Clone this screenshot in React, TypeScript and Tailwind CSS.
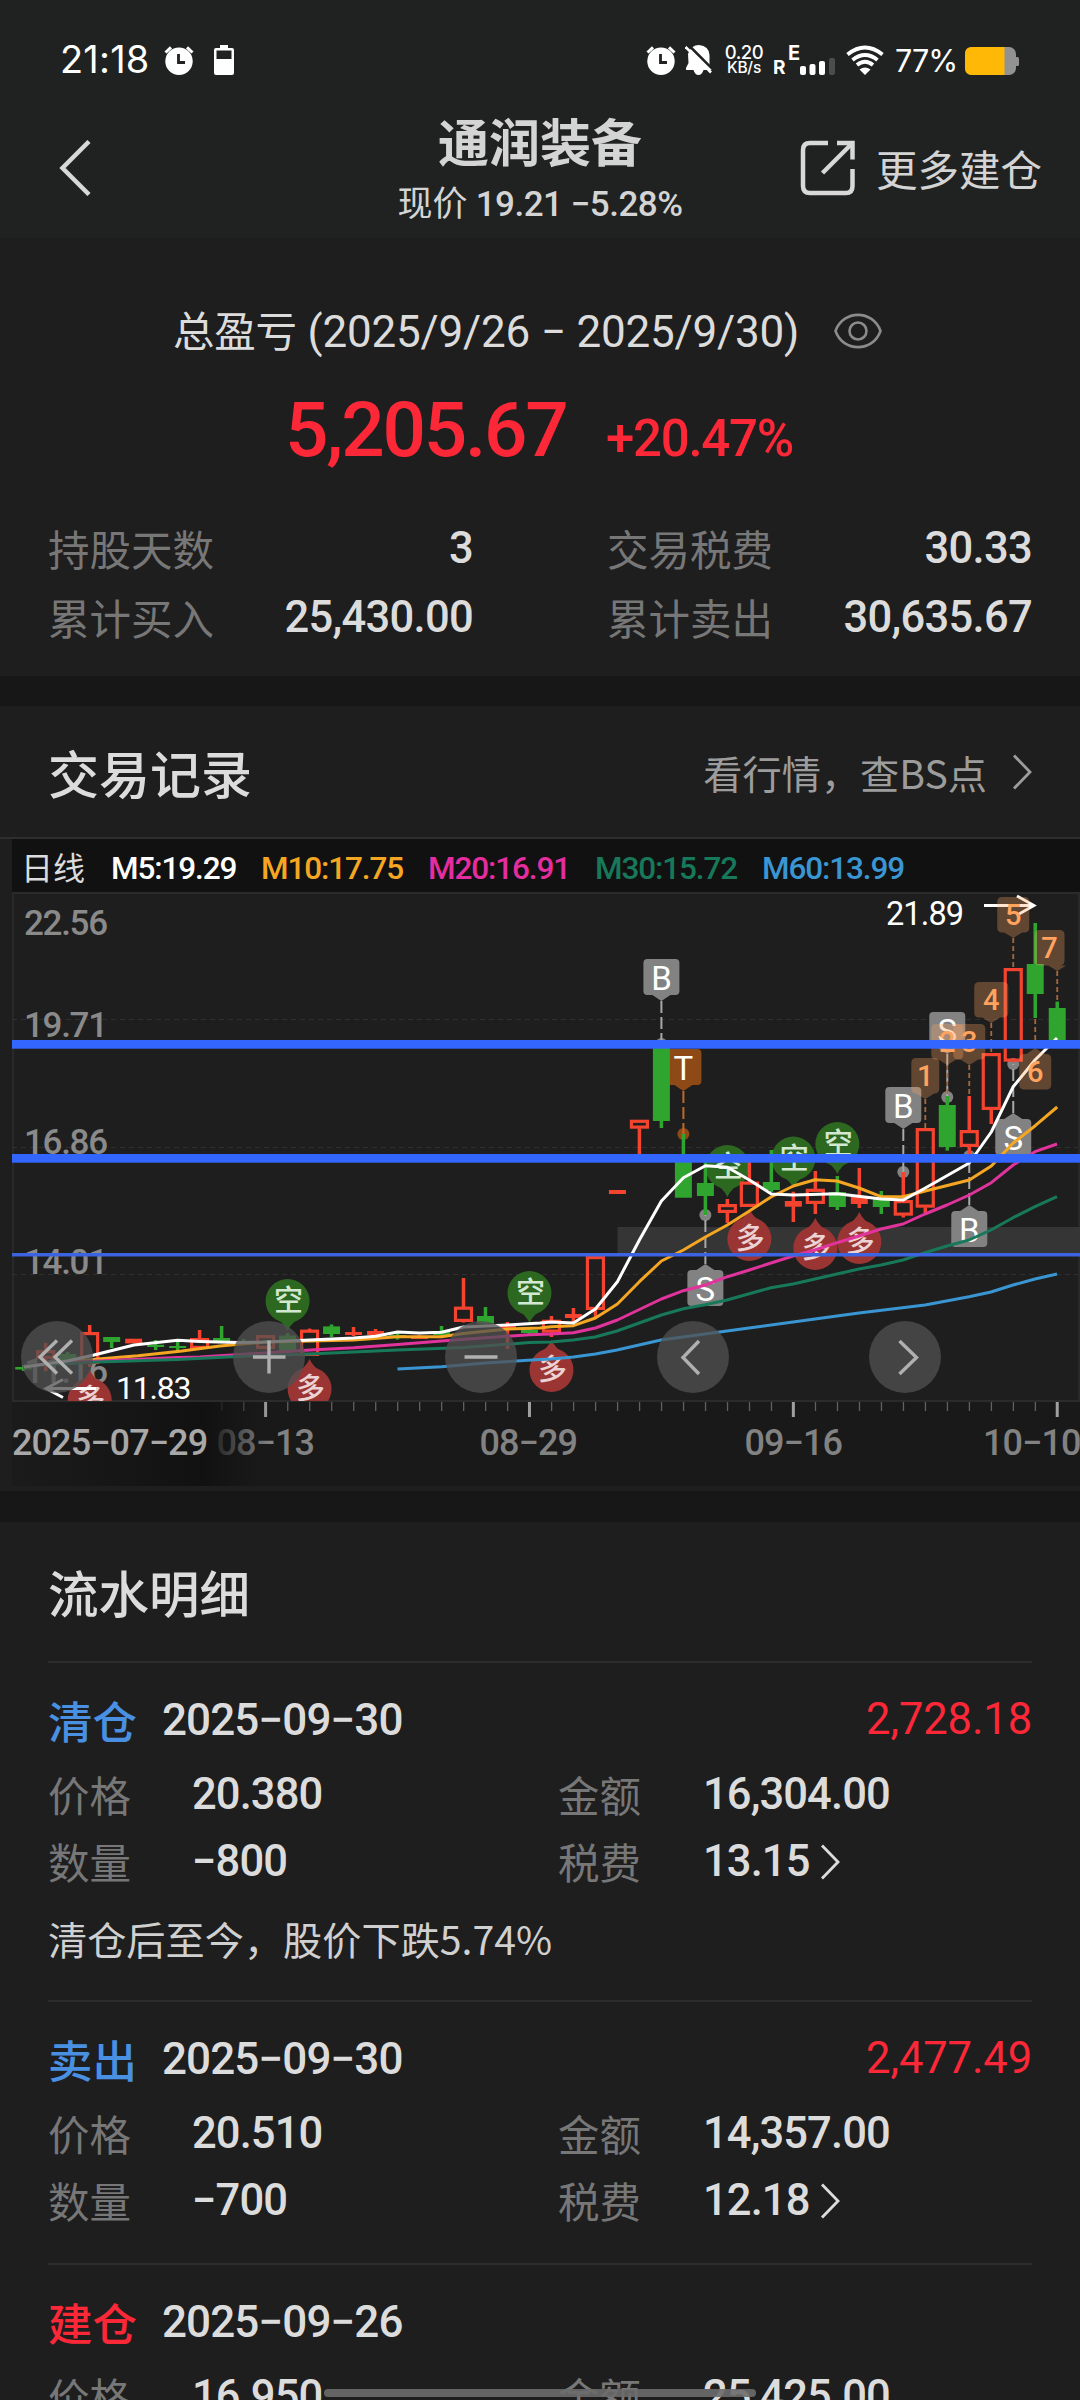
import React from "react";

const CJK = "font-['Noto_Sans_CJK_SC',sans-serif]";
const NUM = "font-['Roboto','Noto_Sans_CJK_SC',sans-serif] whitespace-nowrap";

/* ---------- icons ---------- */

function AlarmIcon() {
  return (
    <svg width="30" height="30" viewBox="0 0 30 30">
      <path d="M1.5 7.5 L7 2.3 M28.5 7.5 L23 2.3" stroke="#fff" strokeWidth="3" />
      <circle cx="15" cy="16.3" r="13.7" fill="#fff" />
      <path d="M14.5 9 V17.5 H21" stroke="#202221" strokeWidth="2.8" fill="none" />
    </svg>
  );
}

function BatteryMini() {
  return (
    <svg width="20" height="30" viewBox="0 0 20 30">
      <path d="M6 0 H14 V3 H18 Q20 3 20 5 V28 Q20 30 18 30 H2 Q0 30 0 28 V5 Q0 3 2 3 H6 Z" fill="#fff" />
      <rect x="2.5" y="5.5" width="15" height="8.5" fill="#202221" />
    </svg>
  );
}

function BellOff() {
  return (
    <svg width="28" height="30" viewBox="0 0 28 30">
      <path d="M3 9 Q6 0 14 0 Q24 1 24.500 10 V20 L27 24 V25 H18.5 Q17 30 13.500 30 Q10 30 8.500 25 H1 V23 L3.500 18 Z" fill="#fff" />
      <path d="M3.500 0 L29 25.500" stroke="#202221" strokeWidth="2.6" />
      <path d="M0.500 2 L26 27.5" stroke="#fff" strokeWidth="2.6" />
    </svg>
  );
}

function WifiIcon() {
  return (
    <svg width="38" height="30" viewBox="0 0 38 30" fill="none" stroke="#fff" strokeWidth="3.8">
      <path d="M1.5 9.5 Q19 -4.5 36.5 9.5" />
      <path d="M6.500 15 Q19 5 31.500 15" />
      <path d="M11 20 Q19 13.500 27 20" />
      <path d="M13.5 24.5 Q19 20.5 24.5 24.5 L19 30 Z" fill="#fff" stroke="none" />
    </svg>
  );
}

function StatusBar() {
  return (
    <div className="flex h-[75px] items-end pl-[60px] text-white">
      <span className="w-[90px] font-['Inter',sans-serif] text-[38px] leading-[31px] tracking-[0.2px]">21:18</span>
      <span className="ml-[14px]"><AlarmIcon /></span>
      <span className="ml-[20px]"><BatteryMini /></span>
      <span className="ml-[412px]"><AlarmIcon /></span>
      <span className="ml-[9px]"><BellOff /></span>
      <span className="ml-[11px] flex w-[40px] flex-col items-center font-['Inter',sans-serif] font-medium">
        <span className="text-[18.5px] leading-[18px] tracking-[-0.5px]">0.20</span>
        <span className="text-[15.5px] leading-[14px] tracking-[-0.2px]">KB/s</span>
      </span>
      <span className="ml-[9px] w-[15px] self-end font-['Inter',sans-serif] text-[19px] font-bold leading-[15px]">R</span>
      <span className="mb-[14px] w-[12px] font-['Inter',sans-serif] text-[20px] font-bold leading-[16px]">E</span>
      <svg width="36" height="17" viewBox="25 13 36 17">
        <rect x="25" y="21" width="6" height="9" rx="2" fill="#fff" />
        <rect x="34.5" y="19" width="6" height="11" rx="2" fill="#fff" />
        <rect x="44" y="16" width="6" height="14" rx="2" fill="#fff" />
        <rect x="54" y="13" width="6" height="17" rx="2" fill="#4b4c4c" />
      </svg>
      <span className="ml-[10px]"><WifiIcon /></span>
      <span className="ml-[11px] w-[62px] font-['Inter',sans-serif] text-[30.5px] leading-[28px] tracking-[-0.9px]">77%</span>
      <svg className="ml-[8px]" width="54" height="28" viewBox="0 0 54 28">
        <rect x="0" y="0" width="51" height="28" rx="7" fill="#929292" />
        <rect x="50" y="10" width="4" height="9" rx="1.5" fill="#929292" />
        <path d="M7 0 H39.5 V28 H7 Q0 28 0 21 V7 Q0 0 7 0 Z" fill="#ffb805" />
      </svg>
    </div>
  );
}

function Header() {
  return (
    <header className="h-[238px] shrink-0 bg-[#202221] text-[#d4d4d4]">
      <StatusBar />
      <div className="flex h-[163px] pt-[30px]">
        <div className="w-[340px] pl-[58px] pt-[35px]">
          <svg width="34" height="56" viewBox="0 0 34 56" fill="none" stroke="#d8d8d8" strokeWidth="4.5">
            <path d="M31 1.5 L4.5 28 L31 54.5" />
          </svg>
        </div>
        <div className="flex w-[400px] flex-col items-center">
          <h1 className={`${CJK} mt-[7px] text-[51px] font-bold leading-[56px]`}>通润装备</h1>
          <div className={`${NUM} mt-[13px] text-[35px] font-medium leading-[40px] tracking-[-0.5px]`}>
            <span className={`${CJK} text-[35px] font-normal tracking-normal`}>现价</span> 19.21 −5.28%
          </div>
        </div>
        <div className="flex pl-[59px] pt-[35px]">
          <svg width="58" height="58" viewBox="0 0 58 58" fill="none" stroke="#d8d8d8" strokeWidth="4.5">
            <path d="M29 3 H11 Q4 3 4 10 V46 Q4 53 11 53 H47 Q53.5 53 53.5 46 V29" />
            <path d="M38 3 H53.5 V19.5" />
            <path d="M53 3.5 L23.5 33" />
          </svg>
          <span className={`${CJK} ml-[19px] whitespace-nowrap text-[41.5px] leading-[56px]`}>更多建仓</span>
        </div>
      </div>
    </header>
  );
}

/* ---------- summary ---------- */

function Stat({ label, value }: { label: string; value: string }) {
  return (
    <div className="flex items-center justify-between">
      <span className={`${CJK} text-[41.5px] leading-[69px] text-[#777]`}>{label}</span>
      <span className={`${NUM} text-[43.5px] font-medium leading-[69px] tracking-[-0.7px] text-[#dcdcdc]`}>{value}</span>
    </div>
  );
}

function Summary() {
  return (
    <section className="h-[438px] shrink-0">
      <div className="flex items-center pl-[173px] pt-[61px]">
        <div className={`${NUM} w-[661px] text-[44px] leading-[60px] tracking-[-0.2px] text-[#dcdcdc]`}>
          <span className={`${CJK} text-[41.5px]`}>总盈亏</span> (2025/9/26 − 2025/9/30)
        </div>
        <svg width="48" height="36" viewBox="0 0 48 36" fill="none" stroke="#8b8b8b" strokeWidth="2.6">
          <path d="M1.5 18 C9 -3.5 39 -3.5 46.5 18 C39 39.5 9 39.5 1.5 18 Z" />
          <circle cx="24" cy="18" r="8.5" />
        </svg>
      </div>
      <div className={`${NUM} flex items-baseline pl-[285px] pt-[23px] text-[#fc2838]`}>
        <span className="w-[321px] text-[76.5px] font-medium leading-[90px] tracking-[-2.2px]">5,205.67</span>
        <span className="text-[51px] font-medium tracking-[-1.3px]">+20.47%</span>
      </div>
      <div className="ml-[48px] mt-[36px] grid grid-cols-[425px_425px] gap-x-[134px]">
        <Stat label="持股天数" value="3" />
        <Stat label="交易税费" value="30.33" />
        <Stat label="累计买入" value="25,430.00" />
        <Stat label="累计卖出" value="30,635.67" />
      </div>
    </section>
  );
}

/* ---------- chart ---------- */

const X = (k: number) => 23.7 + 21.99 * k;
const RED = "#f4432f";
const GREEN = "#2fa52f";

// [slot, kind (r = hollow red, f = solid red, g = green), body top, body bottom, wick top, wick bottom]
type Candle = [number, "r" | "f" | "g", number, number, number, number];
const candles: Candle[] = [
  [0, "g", 1367, 1369.5, 1365, 1371],
  [1, "r", 1350, 1359, 1343, 1371],
  [2, "g", 1354, 1360, 1352, 1361],
  [3, "r", 1332, 1364, 1325, 1367],
  [4, "g", 1337, 1342, 1337, 1348],
  [5, "f", 1338.7, 1343.4, 1338.7, 1343],
  [6, "g", 1344.8, 1347, 1340, 1350],
  [7, "g", 1346, 1348, 1342, 1351],
  [8, "r", 1338, 1349, 1330, 1349],
  [9, "g", 1338, 1342, 1326, 1342],
  [10, "g", 1341, 1343, 1339, 1345],
  [11, "r", 1335, 1349, 1335, 1349],
  [12, "g", 1335.5, 1350.6, 1333, 1351],
  [13, "r", 1329.6, 1356, 1328.6, 1356],
  [14, "g", 1326.4, 1334, 1324.5, 1337],
  [15, "f", 1332, 1335, 1327, 1336],
  [16, "f", 1331, 1335, 1329, 1336],
  [17, "g", 1335, 1337, 1332, 1339.5],
  [18, "f", 1336, 1339, 1335, 1339],
  [19, "g", 1331, 1335, 1326, 1336],
  [20, "r", 1306.6, 1322, 1278, 1322.5],
  [21, "g", 1316, 1323.6, 1307, 1324],
  [22, "f", 1324, 1328, 1322, 1349],
  [23, "g", 1330, 1333, 1328, 1334],
  [24, "r", 1319.7, 1332.7, 1316, 1337],
  [25, "f", 1314, 1318, 1308, 1323],
  [26, "r", 1256, 1310, 1256, 1317],
  [27, "f", 1190, 1194, 1190, 1194],
  [28, "r", 1119.7, 1128.7, 1119.7, 1157],
  [29, "g", 1044, 1121, 1044, 1128],
  [30, "g", 1157, 1197.7, 1134, 1197.7],
  [31, "g", 1183, 1196, 1162, 1215],
  [32, "r", 1204, 1213, 1199, 1223],
  [33, "r", 1181.5, 1207, 1157, 1207],
  [34, "g", 1182, 1190, 1150, 1192],
  [35, "f", 1201, 1206.7, 1191.7, 1222],
  [36, "r", 1188.7, 1204, 1171, 1214],
  [37, "g", 1192, 1207, 1176, 1210],
  [38, "f", 1197, 1204, 1168, 1208],
  [39, "g", 1198, 1207, 1191, 1214],
  [40, "r", 1200, 1215.7, 1172, 1217.5],
  [41, "r", 1128, 1207.7, 1128, 1213],
  [42, "g", 1105, 1147, 1096, 1150.6],
  [43, "r", 1130, 1147, 1096, 1155],
  [44, "r", 1053, 1110, 1053, 1124],
  [45, "r", 968, 1061.7, 968, 1062],
  [46, "g", 964, 994, 923, 1018],
  [47, "g", 1008, 1043, 1001.6, 1043],
];

function CandleMark({ c }: { c: Candle }) {
  const [k, kind, top, bot, hi, lo] = c;
  const x = X(k);
  const color = kind === "g" ? GREEN : RED;
  return (
    <g>
      {hi < top && <rect x={x - 1.75} y={hi} width="3.5" height={top - hi + 0.5} fill={color} />}
      {lo > bot && <rect x={x - 1.75} y={bot - 0.5} width="3.5" height={lo - bot + 0.5} fill={color} />}
      {kind === "r" ? (
        <rect x={x - 8} y={top + 1.6} width="16" height={bot - top - 3.2} fill="none" stroke={color} strokeWidth="3.2" />
      ) : (
        <rect x={x - 8.5} y={top} width="17" height={bot - top} fill={color} />
      )}
    </g>
  );
}

const lines: { color: string; pts: string }[] = [
  {
    color: "#f5a623",
    pts: "24,1366 60,1363 98,1359 138,1355.7 182,1351 220,1346 265.6,1342 310,1341 353.6,1340 397.5,1336.7 441.5,1336.7 463.5,1333.5 507.5,1329 540,1328 551,1326.7 573.4,1325.7 595.4,1318 617.4,1304 639.4,1281.7 661.4,1261 683.4,1250 705.4,1237 727.4,1225 749.4,1211 771,1197 793.3,1186 815,1179.7 837,1181 859,1188 881,1196.7 903,1196.7 925.3,1191 969.3,1180 991.3,1166 1013.2,1143 1035.2,1125.7 1057.2,1107",
  },
  {
    color: "#e0339b",
    pts: "24,1366 60,1363 98,1361 177.7,1357.5 199.7,1357 265.6,1353 310,1350 353.6,1347.8 397.5,1344.6 441.5,1341 482,1338 529.5,1334.7 551,1334 573.4,1332.7 595.4,1328 617.4,1320 661.4,1299 683.4,1290.7 705.4,1285 727.4,1276.7 749.4,1270 771,1263 793,1256 815,1250 837,1242.7 859,1236 881,1229 903,1224 925,1214 947,1205 969.3,1195 991.3,1182.7 1013.2,1165 1035,1151.7 1057,1144",
  },
  {
    color: "#17785a",
    pts: "24,1366 60,1364 98,1362 177.7,1359.5 237,1356.5 310,1354 397.5,1350 463.5,1347.4 529.5,1342.6 551,1342 573,1340 595,1337 617,1331 661.4,1315 683.4,1308.7 705,1304.7 727,1300 771,1287.7 793,1284 837,1274 859,1269 881,1265 903,1260 925,1252.7 947,1246 969,1240 991,1230 1013,1217.7 1035,1206.7 1057,1196.7",
  },
  {
    color: "#3a96d2",
    pts: "397.5,1369 441.5,1366.7 485.5,1363 540,1359.6 551,1359 573.4,1357 595.4,1354 617,1350 661,1340 705,1334 749,1328 815,1319 859,1313 925,1305 969,1296.7 991,1292 1013,1285 1035,1279 1057,1274",
  },
  {
    color: "#ffffff",
    pts: "24,1367 67,1361 93,1355.3 134,1345 177.7,1340.3 199.7,1341.4 237.6,1342.6 265.6,1342 310,1340 353.6,1338 375.6,1336.3 397.5,1332 419.5,1333 441.5,1332.3 463.5,1327 507.5,1325 540,1323 551.4,1322 573.4,1323 595.4,1309 617.4,1281.7 639.4,1240 661.4,1201 683.4,1177.7 705.4,1165.7 727.4,1167.3 749.4,1180 771.4,1194 793.3,1195 837.3,1193.7 881.3,1199 903.3,1200 925.3,1188 969.3,1163 991.3,1132 1013.2,1086.7 1035,1060 1057,1038",
  },
];

const CJK_FONT = "'Noto Sans CJK SC', sans-serif";

/** Round balloon with a tail: green "空" points down, red "多" points up. */
function Balloon({ k, cy, up }: { k: number; cy: number; up?: boolean }) {
  const x = X(k);
  const s = up ? -1 : 1;
  return (
    <g>
      <circle cx={x} cy={cy} r="22" fill={up ? "#9a3533" : "#2c6820"} />
      <path
        d={`M${x - 14} ${cy + 16 * s} Q${x - 4} ${cy + 21 * s} ${x} ${cy + 30 * s} Q${x + 4} ${cy + 21 * s} ${x + 14} ${cy + 16 * s} Z`}
        fill={up ? "#9a3533" : "#2c6820"}
      />
      <text x={x + 1} y={cy + 10} textAnchor="middle" fontSize="29" fill={up ? "#ecd2d2" : "#d3e8d0"} fontFamily={CJK_FONT} fontWeight="500">
        {up ? "多" : "空"}
      </text>
    </g>
  );
}

/** Square flag above (down) or below (up) a candle, tied to it with a dashed line. */
function Flag({ k, y, t, up, to, dot, fill = "#828282", line = "#a8a8a8" }: {
  k: number; y: number; t: string; up?: boolean; to: number; dot?: boolean; fill?: string; line?: string;
}) {
  const x = X(k);
  const tip = up ? y - 6 : y + 42;
  const base = up ? y : y + 36;
  return (
    <g>
      {dot && <circle cx={x} cy={to} r="6" fill={fill} />}
      <line x1={x} x2={x} y1={tip} y2={to} stroke={line} strokeWidth="2" strokeDasharray="12 4" />
      <rect x={x - 18} y={y} width="36" height="36" rx="4" fill={fill} />
      <path d={`M${x - 9} ${base} L${x} ${tip} L${x + 9} ${base} Z`} fill={fill} />
      <text x={x} y={y + 30.5} textAnchor="middle" fontSize="33" fill="#fff" fontFamily="Roboto">{t}</text>
    </g>
  );
}

/** Translucent orange day counter. */
function Counter({ k, y, n, up, to, w = 32, dx = 0 }: {
  k: number; y: number; n: string; up?: boolean; to: number; w?: number; dx?: number;
}) {
  const x = X(k);
  const tip = up ? y - 6 : y + 41;
  const base = up ? y : y + 35.5;
  return (
    <g>
      <line x1={x} x2={x} y1={tip} y2={to} stroke="#a8683c" strokeWidth="1.8" strokeDasharray="5 3" />
      <path
        d={`M${x - w / 2 + 5 + dx} ${y} h${w - 10} q5 0 5 5 v25.5 q0 5 -5 5 h-${w - 10} q-5 0 -5 -5 v-25.5 q0 -5 5 -5 Z M${x - 9} ${base} L${x} ${tip} L${x + 9} ${base} Z`}
        fill="#ffa464"
        fillOpacity="0.3"
      />
      <text x={x + dx} y={y + 28} textAnchor="middle" fontSize="29" fill="#ffa35f" fontFamily="Roboto" fontWeight="500">{n}</text>
    </g>
  );
}

function Chart() {
  return (
    <svg className="ml-[12px] block" width="1068" height="595" viewBox="12 892 1068 595" fontFamily="Roboto">
      <defs>
        <linearGradient id="fade" x1="12" x2="270" y1="0" y2="0" gradientUnits="userSpaceOnUse">
          <stop offset="0" stopColor="#1b1b1b" />
          <stop offset="0.5" stopColor="#151515" />
          <stop offset="0.74" stopColor="#111" />
          <stop offset="1" stopColor="#151515" stopOpacity="0" />
        </linearGradient>
        <clipPath id="plot"><rect x="12" y="893" width="1068" height="508" /></clipPath>
      </defs>

      <rect x="12" y="892" width="1068" height="509" fill="#1e1e1e" />
      <rect x="12" y="1402" width="1068" height="84" fill="#191919" />
      <path d="M12 893 H1080 M13 893 V1401 M1079 893 V1401 M12 1401 H1080" stroke="#2b2b2b" strokeWidth="1.8" />
      <path d="M12 1019.5 H1080 M12 1147.5 H1080 M12 1274.5 H1080" stroke="#2f2f2f" strokeWidth="1.2" strokeDasharray="5 4" />
      <g clipPath="url(#plot)">
        <rect x="617.5" y="1227" width="463" height="28" fill="#353535" />

        <g fontSize="35" letterSpacing="-1.3" fill="#8a8a8a" fontWeight="500">
          <text x="24" y="935">22.56</text>
          <text x="24" y="1037">19.71</text>
          <text x="24" y="1153.5">16.86</text>
          <text x="24" y="1274">14.01</text>
          <text x="24" y="1383">11.16</text>
        </g>

        <Flag k={29} y={959} t="B" to={1044} dot />
        <Flag k={30} y={1049} t="T" to={1134} dot fill="#8e4a16" line="#c0682a" />
        <Flag k={31} y={1270} t="S" up to={1215} dot />
        <Flag k={40} y={1087} t="B" to={1172} dot />
        <Flag k={42} y={1012} t="S" to={1097} dot />
        <Flag k={45} y={1119} t="S" up to={1064} dot />
        <Flag k={43} y={1211} t="B" up to={1156} dot />

        <Balloon k={12} cy={1301} />
        <Balloon k={23} cy={1293} />
        <Balloon k={32} cy={1167} />
        <Balloon k={35} cy={1158.5} />
        <Balloon k={37} cy={1144} />
        <Balloon k={3} cy={1400} up />
        <Balloon k={13} cy={1389} up />
        <Balloon k={24} cy={1370} up />
        <Balloon k={33} cy={1239} up />
        <Balloon k={36} cy={1248} up />
        <Balloon k={38} cy={1242} up />

        {candles.map((c) => <CandleMark key={c[0]} c={c} />)}

        {lines.map((l) => (
          <polyline key={l.color} points={l.pts} fill="none" stroke={l.color} strokeWidth="3" strokeLinejoin="round" />
        ))}

        <text x="886" y="925" fontSize="32.5" fill="#fff" letterSpacing="-0.9">21.89</text>
        <path d="M984 905.5 H1034 M1017 896 L1034 905.5 L1019 914" stroke="#fff" strokeWidth="2.8" fill="none" />
        <text x="116" y="1399" fontSize="32" fill="#fff" letterSpacing="-1.2">11.83</text>
        <path d="M96 1388.5 H46 M63 1379.5 L46 1388.5 L63 1397.5" stroke="#fff" strokeWidth="2.8" fill="none" />

        <Counter k={41} y={1058} n="1" to={1128} w={28} />
        <Counter k={42} y={1024} n="2" to={1096} />
        <Counter k={43} y={1024} n="3" to={1096} />
        <Counter k={44} y={982} n="4" to={1053} w={34} />
        <Counter k={45} y={897} n="5" to={968} />
        <Counter k={46} y={1054} n="6" up to={1018} />
        <Counter k={47} y={930} n="7" to={1001} w={30} dx={-7.7} />

        <rect x="12" y="1040" width="1068" height="8.7" fill="#3366ff" />
        <rect x="12" y="1154" width="1068" height="8.7" fill="#3366ff" />
        <rect x="12" y="1253" width="1068" height="3.5" fill="#3c63e0" />

        <g fill="#505050" fillOpacity="0.76">
          {[57, 269, 481, 693, 905].map((cx) => <circle key={cx} cx={cx} cy="1357" r="36" />)}
        </g>
        <g stroke="#b0b0b0" strokeWidth="3.4" fill="none">
          <path d="M57 1340.5 L40 1357 L57 1373.5 M72 1340.5 L55 1357 L72 1373.5" />
          <path d="M253 1357 H285.5 M269 1340.5 V1373.5" />
          <path d="M464.5 1357 H497.5" />
          <path d="M699 1341 L683 1357.5 L699 1374" />
          <path d="M899.5 1341 L916.5 1357.5 L899.5 1374" />
        </g>
      </g>

      {Array.from({ length: 39 }, (_, i) => i + 9).map((k) => {
        const major = (k - 11) % 12 === 0;
        return (
          <rect key={k} x={X(k) - (major ? 1.5 : 0.5)} y="1402" width={major ? 3 : 1.3} height={major ? 15 : 9} fill={major ? "#a0a0a0" : "#606060"} />
        );
      })}
      <g fontSize="36" letterSpacing="-0.9" fontWeight="500" fill="#828282">
        <text x="216.5" y="1455">08−13</text>
        <text x="479.5" y="1455">08−29</text>
        <text x="744.5" y="1455">09−16</text>
        <text x="983" y="1455">10−10</text>
        <rect x="12" y="1402" width="258" height="84" fill="url(#fade)" />
        <text x="12" y="1455" fill="#a8a8a8">2025−07−29</text>
      </g>
    </svg>
  );
}

function Chevron({ color, className = "" }: { color: string; className?: string }) {
  return (
    <svg className={className} width="20" height="36" viewBox="0 0 20 36" fill="none" stroke={color} strokeWidth="2.8">
      <path d="M2 1.5 L18 18 L2 34.5" />
    </svg>
  );
}

function TradeChart() {
  return (
    <section className="h-[785px] shrink-0">
      <div className="flex h-[133px] items-center justify-between border-b-2 border-[#2e2e2e] px-[48px] pt-[2px]">
        <h2 className={`${CJK} text-[51px] font-medium text-[#dcdcdc]`}>交易记录</h2>
        <div className={`${CJK} flex items-center text-[39.2px] text-[#9c9c9c]`}>
          <span>看行情，查BS点</span>
          <Chevron color="#9c9c9c" className="ml-[25px]" />
        </div>
      </div>
      <div className={`${NUM} ml-[12px] flex h-[53px] items-center bg-[#111] pl-[9px] pt-[6px] text-[31.5px] font-medium tracking-[-1.1px]`}>
        <span className={`${CJK} -mt-[5px] w-[90px] text-[32px] font-normal tracking-normal text-[#dcdcdc]`}>日线</span>
        <span className="w-[150px] text-white">M5:19.29</span>
        <span className="w-[167px] text-[#f5a623]">M10:17.75</span>
        <span className="w-[167px] text-[#e52da0]">M20:16.91</span>
        <span className="w-[167px] text-[#17785a]">M30:15.72</span>
        <span className="text-[#3a96d2]">M60:13.99</span>
      </div>
      <Chart />
    </section>
  );
}

/* ---------- records ---------- */

interface Rec {
  kind: string; tone: "sell" | "buy"; date: string; profit?: string;
  price: string; amount: string; qty?: string; tax?: string; note?: string;
}

const records: Rec[] = [
  { kind: "清仓", tone: "sell", date: "2025−09−30", profit: "2,728.18", price: "20.380", amount: "16,304.00", qty: "−800", tax: "13.15", note: "清仓后至今，股价下跌5.74%" },
  { kind: "卖出", tone: "sell", date: "2025−09−30", profit: "2,477.49", price: "20.510", amount: "14,357.00", qty: "−700", tax: "12.18" },
  { kind: "建仓", tone: "buy", date: "2025−09−26", price: "16.950", amount: "25,425.00" },
];

function Row({ a, av, b, bv, more }: { a: string; av: string; b: string; bv: string; more?: boolean }) {
  const label = `${CJK} text-[41.5px] text-[#777]`;
  const value = `${NUM} text-[43.5px] font-medium tracking-[-0.9px] text-[#dcdcdc]`;
  return (
    <div className="flex h-[67px] items-center leading-[67px]">
      <span className={`${label} w-[144px]`}>{a}</span>
      <span className={`${value} w-[366px]`}>{av}</span>
      <span className={`${label} w-[145px]`}>{b}</span>
      <span className={value}>{bv}</span>
      {more && <Chevron color="#dcdcdc" className="ml-[11px]" />}
    </div>
  );
}

function RecordItem({ r }: { r: Rec }) {
  const tone = r.tone === "sell" ? "text-[#4a90e2]" : "text-[#fc2838]";
  return (
    <li className="border-t-2 border-[#2c2c2c] pt-[21px]">
      <div className="flex h-[72px] items-center leading-[72px]">
        <span className={`${CJK} ${tone} w-[114px] text-[44.5px] font-medium`}>{r.kind}</span>
        <span className={`${NUM} text-[44px] font-medium tracking-[-0.9px] text-[#dcdcdc]`}>{r.date}</span>
        <span className={`${NUM} ml-auto text-[43.5px] tracking-[-0.1px] text-[#fc2838]`}>{r.profit}</span>
      </div>
      <div className="pt-[5px]">
        <Row a="价格" av={r.price} b="金额" bv={r.amount} />
        {r.qty && r.tax && <Row a="数量" av={r.qty} b="税费" bv={r.tax} more />}
      </div>
      {r.note ? (
        <p className={`${CJK} h-[105px] pt-[13px] text-[39.2px] leading-[60px] text-[#d0d0d0]`}>{r.note}</p>
      ) : (
        <div className="h-[29px]" />
      )}
    </li>
  );
}

export default function App() {
  return (
    <main className="relative flex h-[2400px] w-[1080px] flex-col overflow-hidden bg-[#1e1e1e]">
      <Header />
      <Summary />
      <div className="h-[30px] shrink-0 bg-[#171717]" />
      <TradeChart />
      <div className="h-[31px] shrink-0 bg-[#171717]" />
      <section className="shrink-0 px-[48px]">
        <h2 className={`${CJK} flex h-[139px] items-center pt-[1px] text-[50.5px] font-medium text-[#dcdcdc]`}>流水明细</h2>
        <ul>
          {records.map((r, i) => <RecordItem key={i} r={r} />)}
        </ul>
      </section>
      <div className="absolute bottom-[3px] left-[324px] h-[8px] w-[432px] rounded-full bg-[#6b6b6b]/90" />
    </main>
  );
}
